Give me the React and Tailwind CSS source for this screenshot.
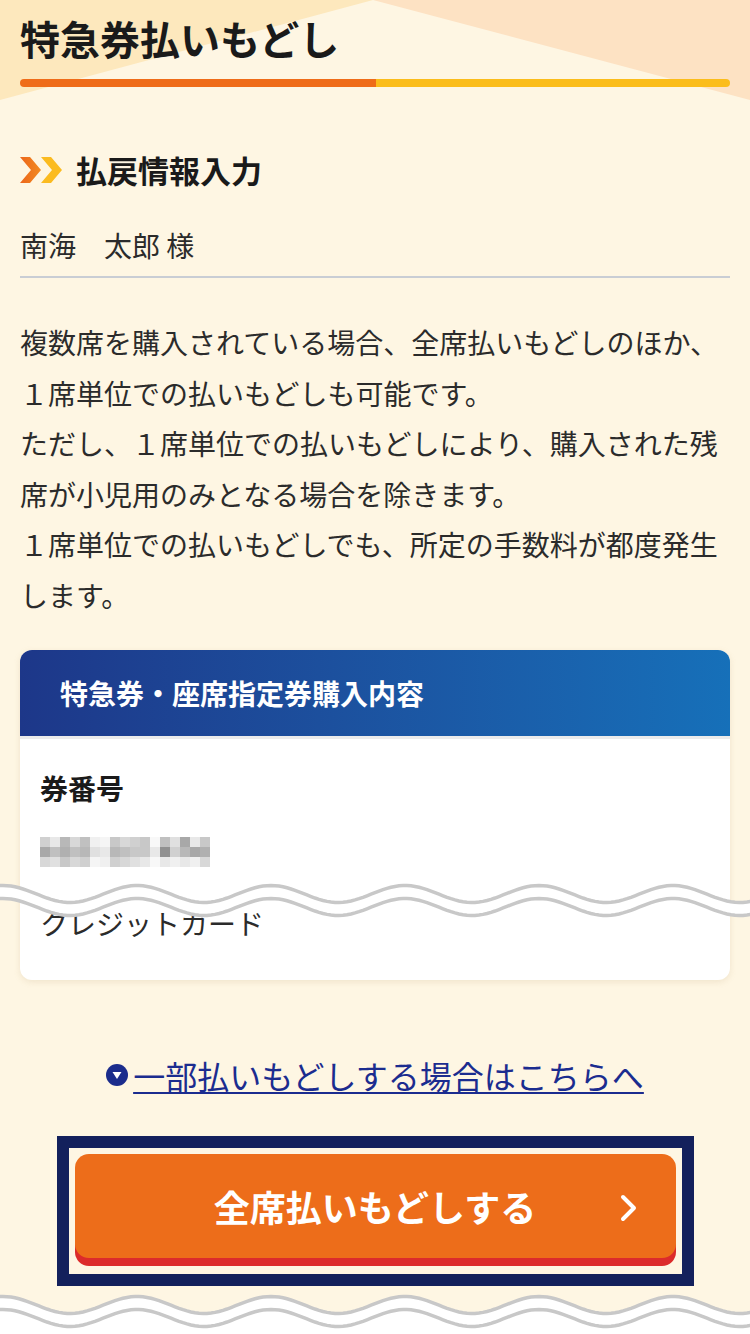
import React from "react";

function wave(cy, amp, period, phase, width) {
  const pts = [];
  for (let x = -5; x <= width + 5; x += 4) {
    const y = cy - amp * Math.cos((2 * Math.PI * (x - phase)) / period);
    pts.push([x, Math.round(y * 100) / 100]);
  }
  return pts;
}
const toD = (pts) => pts.map((p, i) => (i === 0 ? "M" : "L") + p[0] + " " + p[1]).join(" ");

function CardWave() {
  const up = wave(17, 8.5, 134, 137, 750);
  const lo = wave(30, 8.5, 134, 137, 750);
  const fill = toD(up) + " " + lo.slice().reverse().map((p) => "L" + p[0] + " " + p[1]).join(" ") + " Z";
  return (
    <svg width="750" height="48" viewBox="0 0 750 48" className="block">
      <path d={fill} fill="#ffffff" />
      <path d={toD(up)} fill="none" stroke="#c8c8c8" strokeWidth="3.5" />
      <path d={toD(lo)} fill="none" stroke="#c8c8c8" strokeWidth="3.5" />
    </svg>
  );
}

function BottomWave() {
  const up = wave(15, 8.5, 134, 137, 750);
  const lo = wave(28, 8.5, 134, 137, 750);
  const fill = toD(up) + " L755 44 L-5 44 Z";
  return (
    <svg width="750" height="44" viewBox="0 0 750 44" className="block">
      <path d={fill} fill="#ffffff" />
      <path d={toD(up)} fill="none" stroke="#c8c8c8" strokeWidth="3.5" />
      <path d={toD(lo)} fill="none" stroke="#c8c8c8" strokeWidth="3.5" />
    </svg>
  );
}

const blocks = [
  ["#d0d0d0", "#e8e8e8", "#b8b8b8", "#d8d8d8", "#c0c0c0", "#f0f0f0", "#f5f5f5", "#c8c8c8", "#d8d8d8", "#d0d0d0", "#c8c8c8", "#f8f8f8", "#c0c0c0", "#e0e0e0", "#a8a8a8", "#e8e8e8", "#c8c8c8"],
  ["#a8a8a8", "#c0c0c0", "#b0b0b0", "#c0c0c0", "#b8b8b8", "#e0e0e0", "#e8e8e8", "#b8b8b8", "#c0c0c0", "#c8c8c8", "#c8c8c8", "#e8e8e8", "#909090", "#d0d0d0", "#b8b8b8", "#a8a8a8", "#b0b0b0"],
  ["#d8d8d8", "#e0e0e0", "#c8c8c8", "#d8d8d8", "#d0d0d0", "#f5f5f5", "#f0f0f0", "#d0d0d0", "#d8d8d8", "#e0e0e0", "#e8e8e8", "#f8f8f8", "#e8e8e8", "#f0f0f0", "#e8e8e8", "#f0f0f0", "#d8d8d8"],
];

function Chevrons() {
  return (
    <svg width="43" height="26" viewBox="0 0 43 26" className="block shrink-0">
      <defs>
        <linearGradient id="og" x1="0" x2="1" y1="0" y2="0">
          <stop offset="0" stopColor="#ec661b" />
          <stop offset="1" stopColor="#f28a1f" />
        </linearGradient>
      </defs>
      <polygon points="0,0 10,0 21,13 10,26 0,26 11,13" fill="url(#og)" />
      <polygon points="21,0 31,0 42,13 31,26 21,26 32,13" fill="#fbbb20" />
    </svg>
  );
}

export default function App() {
  return (
    <div className="relative w-[750px] min-h-[1334px] overflow-hidden bg-[#fef6e3] font-['Noto_Sans_CJK_JP','Noto_Sans',sans-serif] text-[#2b2b2b]">
      <svg width="750" height="110" viewBox="0 0 750 110" className="absolute left-0 top-0">
        <polygon points="0,0 373,0 0,100" fill="#fde8bd" />
        <polygon points="373,0 750,0 750,100" fill="#fde2c3" />
      </svg>

      <div className="relative flex flex-col px-5">
        <h1 className="pt-[14px] text-[40px] font-bold leading-[48px] text-[#1a1a1a]">特急券払いもどし</h1>
        <div className="mt-[17px] flex h-2">
          <div className="w-[356px] rounded-l-full bg-[#ef6c19]" />
          <div className="flex-1 rounded-r-full bg-[#fbbd1b]" />
        </div>

        <div className="mt-[63px] flex h-10 items-center gap-[13px]">
          <Chevrons />
          <h2 className="text-[31px] font-bold leading-10 text-[#1a1a1a]">払戻情報入力</h2>
        </div>

        <p className="mt-[35px] text-[28px] leading-10">南海　太郎 様</p>
        <div className="mt-[11px] h-[2px] bg-[#c9cdd4]" />

        <p className="mt-[39px] text-[28px] leading-[50.6px]">
          複数席を購入されている場合、全席払いもどしのほか、
          <br />
          １席単位での払いもどしも可能です。
          <br />
          ただし、１席単位での払いもどしにより、購入された残席が小児用のみとなる場合を除きます。
          <br />
          １席単位での払いもどしでも、所定の手数料が都度発生します。
        </p>

        <div className="relative mt-[29px]">
          <div className="overflow-hidden rounded-[12px] bg-white shadow-[0_2px_6px_rgba(180,150,100,0.18)]">
            <div className="flex h-[86px] items-center bg-linear-to-r from-[#1d3789] to-[#1670b9] pl-10">
              <span className="text-[28px] font-bold leading-10 text-white">特急券・座席指定券購入内容</span>
            </div>
            <div className="border-t-[3px] border-[#ebebeb] px-5 pb-[37px] pt-[29px]">
              <p className="text-[28px] font-bold leading-10 text-[#1a1a1a]">券番号</p>
              <div className="mt-[29px] flex flex-col">
                {blocks.map((row, r) => (
                  <div key={r} className="flex">
                    {row.map((c, i) => (
                      <div key={i} className="h-[10px] w-[10px]" style={{ backgroundColor: c }} />
                    ))}
                  </div>
                ))}
              </div>
              <p className="mt-[36px] text-[28px] leading-10">クレジットカード</p>
            </div>
          </div>
          <div className="absolute left-[-20px] top-[227px]">
            <CardWave />
          </div>
        </div>

        <div className="mt-[73px] flex items-center justify-center gap-[5px]">
          <svg width="22" height="22" viewBox="0 0 22 22" className="block shrink-0">
            <circle cx="11" cy="11" r="11" fill="#1b2c8c" />
            <polygon points="6.5,8 15.5,8 11,15" fill="#ffffff" />
          </svg>
          <a className="text-[32px] leading-[44px] text-[#1b2c8f] underline decoration-2 underline-offset-[3px]">
            一部払いもどしする場合はこちらへ
          </a>
        </div>

        <div className="mx-auto mt-[39px] w-[637px] border-[12px] border-[#13205c] px-[6px] pb-[16px] pt-[6px]">
          <div className="relative flex h-[104px] items-center justify-center rounded-[14px] bg-[#ed6d1a] shadow-[0_8px_0_#dc2b2b]">
            <span className="text-[36px] font-bold leading-none text-white">全席払いもどしする</span>
            <svg width="18" height="28" viewBox="0 0 18 28" className="absolute right-[38px] top-[40px]">
              <polyline points="3,3 14,14 3,25" fill="none" stroke="#ffffff" strokeWidth="4" strokeLinecap="round" strokeLinejoin="round" />
            </svg>
          </div>
        </div>
      </div>

      <div className="relative mt-[4px]">
        <BottomWave />
      </div>
    </div>
  );
}
